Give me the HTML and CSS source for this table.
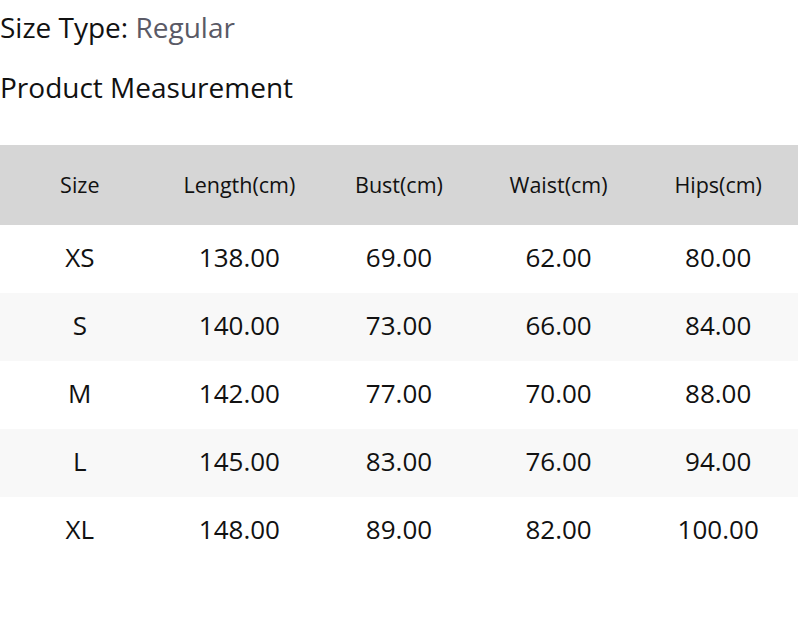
FILE: index.html
```html
<!DOCTYPE html>
<html>
<head>
<meta charset="utf-8">
<link rel="stylesheet" href="styles.css">
</head>
<body>
<div class="page">
  <div class="size-type"><span class="label">Size Type:</span> <span class="value">Regular</span></div>
  <div class="title">Product Measurement</div>
  <table class="measure">
    <thead>
      <tr><th>Size</th><th>Length(cm)</th><th>Bust(cm)</th><th>Waist(cm)</th><th>Hips(cm)</th></tr>
    </thead>
    <tbody>
      <tr><td>XS</td><td>138.00</td><td>69.00</td><td>62.00</td><td>80.00</td></tr>
      <tr><td>S</td><td>140.00</td><td>73.00</td><td>66.00</td><td>84.00</td></tr>
      <tr><td>M</td><td>142.00</td><td>77.00</td><td>70.00</td><td>88.00</td></tr>
      <tr><td>L</td><td>145.00</td><td>83.00</td><td>76.00</td><td>94.00</td></tr>
      <tr><td>XL</td><td>148.00</td><td>89.00</td><td>82.00</td><td>100.00</td></tr>
    </tbody>
  </table>
</div>
</body>
</html>
```

FILE: styles.css
```css
html, body {
  margin: 0;
  padding: 0;
  background: #fff;
}
.page {
  font-family: "Open Sans", "Noto Sans", sans-serif;
  color: #111;
  width: 798px;
}
.size-type {
  font-size: 28px;
  line-height: 40px;
  margin-top: 7px;
  word-spacing: 0;
}
.size-type .value {
  color: #5a5a66;
}
.title {
  font-size: 28px;
  line-height: 40px;
  margin-top: 20px;
}
.measure {
  margin-top: 38px;
  width: 798px;
  border-collapse: collapse;
  table-layout: fixed;
}
.measure th {
  background: #d6d6d6;
  font-weight: 400;
  font-size: 21.5px;
  height: 78px;
  padding: 0 0 2px;
  text-align: center;
}
.measure td {
  font-size: 26px;
  height: 64px;
  padding: 0 0 4px;
  text-align: center;
}
.measure tbody tr:nth-child(even) td {
  background: #f8f8f8;
}
```
